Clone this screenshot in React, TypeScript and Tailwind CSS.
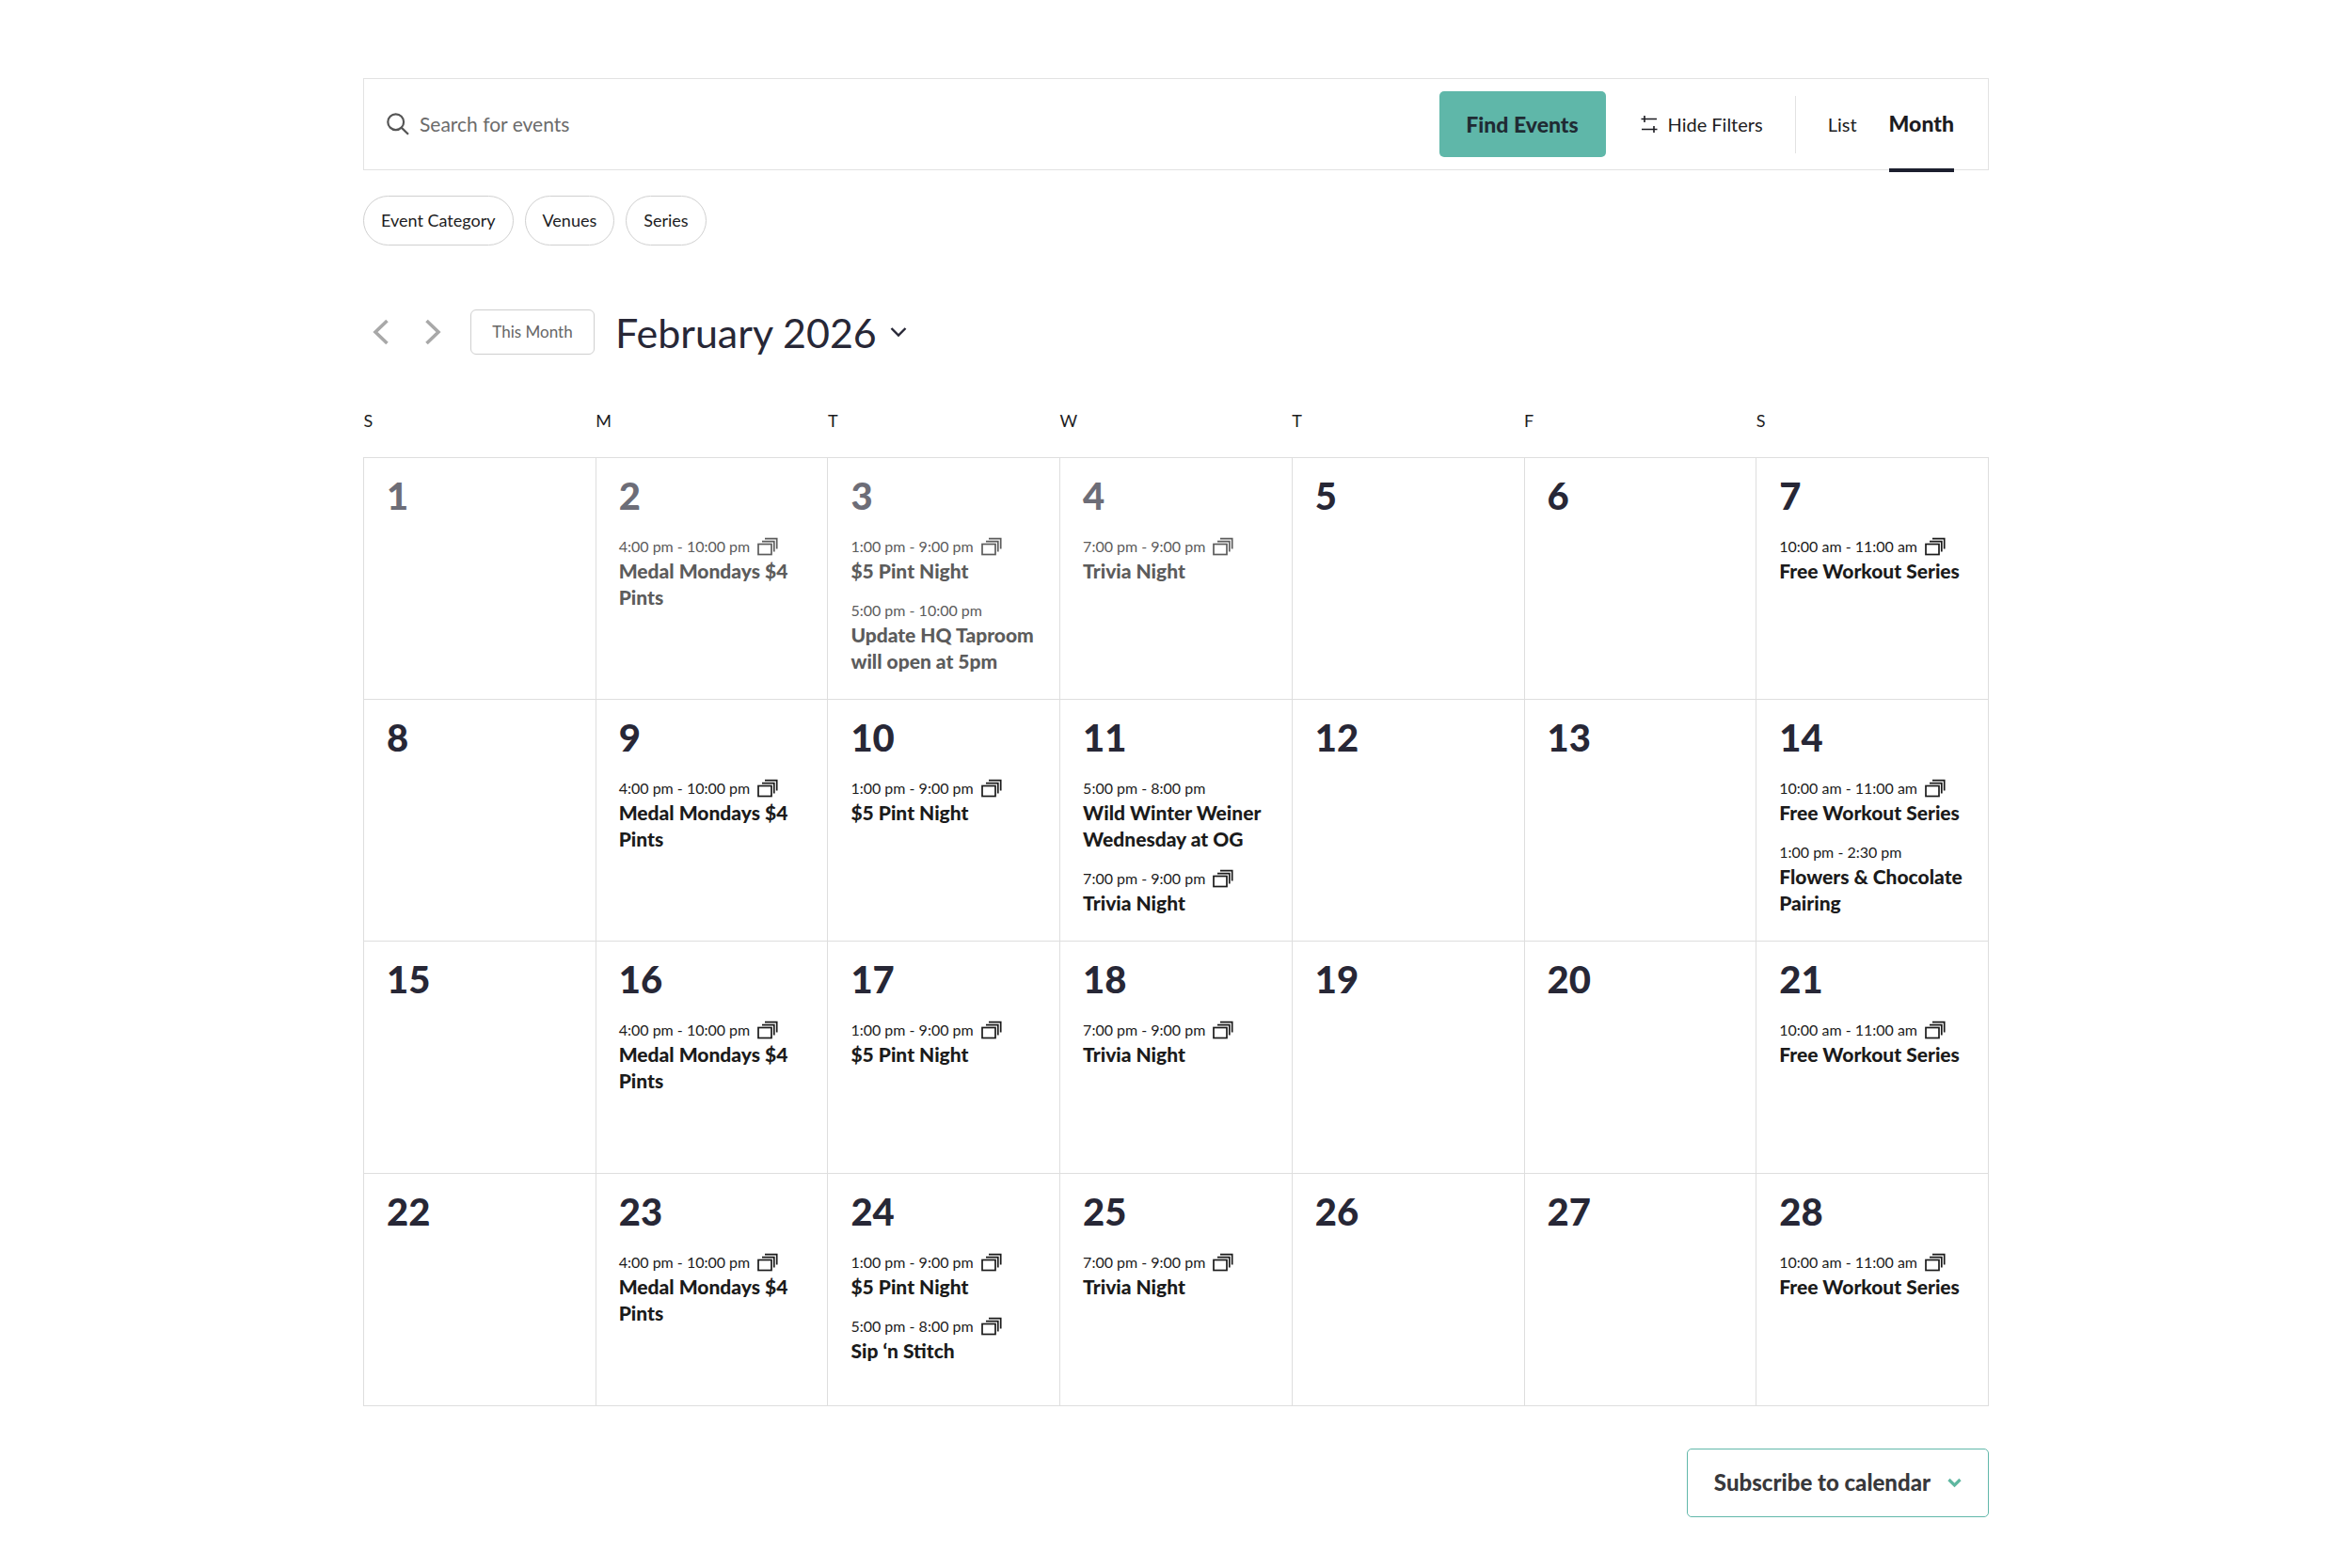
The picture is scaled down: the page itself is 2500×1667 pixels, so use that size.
import React from "react";

type CalendarEvent = { time: string; title: string; recurring?: boolean };

const medal: CalendarEvent = { time: "4:00 pm - 10:00 pm", title: "Medal Mondays $4 Pints", recurring: true };
const pint: CalendarEvent = { time: "1:00 pm - 9:00 pm", title: "$5 Pint Night", recurring: true };
const trivia: CalendarEvent = { time: "7:00 pm - 9:00 pm", title: "Trivia Night", recurring: true };
const workout: CalendarEvent = { time: "10:00 am - 11:00 am", title: "Free Workout Series", recurring: true };

const eventsByDay: Record<number, CalendarEvent[]> = {
  2: [medal],
  3: [pint, { time: "5:00 pm - 10:00 pm", title: "Update HQ Taproom will open at 5pm" }],
  4: [trivia],
  7: [workout],
  9: [medal],
  10: [pint],
  11: [{ time: "5:00 pm - 8:00 pm", title: "Wild Winter Weiner Wednesday at OG" }, trivia],
  14: [workout, { time: "1:00 pm - 2:30 pm", title: "Flowers & Chocolate Pairing" }],
  16: [medal],
  17: [pint],
  18: [trivia],
  21: [workout],
  23: [medal],
  24: [pint, { time: "5:00 pm - 8:00 pm", title: "Sip ‘n Stitch", recurring: true }],
  25: [trivia],
  28: [workout],
};

const weekdays = [
  ["Sunday", "S"],
  ["Monday", "M"],
  ["Tuesday", "T"],
  ["Wednesday", "W"],
  ["Thursday", "T"],
  ["Friday", "F"],
  ["Saturday", "S"],
];
const weeks = [0, 1, 2, 3].map((w) => [1, 2, 3, 4, 5, 6, 7].map((d) => w * 7 + d));
const lastPastDay = 4;

function SeriesIcon() {
  return (
    <svg className="shrink-0" width="22" height="20" viewBox="0 0 22 20" fill="none" stroke="currentColor" strokeWidth="1.7" aria-label="Recurring">
      <rect x="1" y="7.5" width="14" height="11" />
      <path d="M5 4.6H17.8V15.5M8 1.7H20.7V12.5" />
    </svg>
  );
}

function Chevron({ d, className, width, height, viewBox, stroke }: { d: string; className?: string; width: number; height: number; viewBox: string; stroke: number }) {
  return (
    <svg className={className} width={width} height={height} viewBox={viewBox} fill="none" stroke="currentColor" strokeWidth={stroke} aria-hidden="true">
      <path d={d} />
    </svg>
  );
}

function SearchBar() {
  return (
    <form className="flex h-[98px] items-stretch border border-[#e2e2e2] pr-9" onSubmit={(e) => e.preventDefault()}>
      <label htmlFor="event-search" aria-label="Search for events" className="flex items-center pl-6 text-[#555]">
        <svg width="24" height="24" viewBox="0 0 24 24" fill="none" stroke="currentColor" strokeWidth="2.2" aria-hidden="true">
          <circle cx="9.7" cy="9.7" r="8.4" />
          <path d="M15.6 15.6 23 22.8" />
        </svg>
      </label>
      <input
        id="event-search"
        type="text"
        placeholder="Search for events"
        className="min-w-0 flex-1 bg-transparent pl-[11px] text-[21px] text-[#222] outline-none placeholder:text-[#6b6b6b]"
      />
      <button type="submit" className="my-auto h-[70px] w-[177px] shrink-0 rounded-[5px] bg-[#5fb7a9] text-[23px] font-black text-[#1f2b33]">
        Find Events
      </button>
      <button type="button" className="ml-9 flex shrink-0 items-center gap-2.5 text-[20px] text-[#1c1c22]">
        <svg width="20" height="20" viewBox="0 0 20 20" fill="none" stroke="currentColor" strokeWidth="1.6" aria-hidden="true">
          <path d="M1.5 4.5H18M5 1V8M2 15.5H18.5M15 12V19" />
        </svg>
        Hide Filters
      </button>
      <div className="my-auto ml-[34px] h-[61px] w-px shrink-0 bg-[#e2e2e2]" />
      <nav className="ml-[34px] flex shrink-0 gap-[34px] text-[#1c1c22]">
        <a href="#list" className="flex items-center text-[20px]">List</a>
        <a href="#month" aria-current="page" className="-mb-[3px] flex items-center border-b-4 border-[#1c1f2e] text-[23px] font-black">Month</a>
      </nav>
    </form>
  );
}

function EventItem({ event }: { event: CalendarEvent }) {
  return (
    <li>
      <div className="flex h-6 items-center gap-2 whitespace-nowrap text-[16px] leading-6">
        <time>{event.time}</time>
        {event.recurring && <SeriesIcon />}
      </div>
      <a href="#event" className="block text-[21px] font-black leading-7">{event.title}</a>
    </li>
  );
}

function DayCell({ day }: { day: number }) {
  const past = day <= lastPastDay;
  const events = eventsByDay[day] ?? [];
  return (
    <td className="h-[247px] border border-[#dedede] px-6 pb-[26px] pt-5 align-top">
      <h3 className={past ? "text-[40px] font-black leading-10 text-[#6d6d77]" : "text-[40px] font-black leading-10 text-[#272736]"}>{day}</h3>
      {events.length > 0 && (
        <ul className={past ? "mt-[22px] flex flex-col gap-4 text-[#5c5c5c]" : "mt-[22px] flex flex-col gap-4 text-[#1b1b1b]"}>
          {events.map((e) => (
            <EventItem key={e.time} event={e} />
          ))}
        </ul>
      )}
    </td>
  );
}

export default function App() {
  return (
    <main className="min-h-screen bg-white px-8 pb-[52px] pt-[83px] font-['Lato',sans-serif] text-[#1c1c22]">
      <div className="mx-auto w-full max-w-[1728px]">
        <SearchBar />

        <div className="mt-[27px] flex gap-3">
          {["Event Category", "Venues", "Series"].map((label) => (
            <button key={label} type="button" className="h-[53px] rounded-full border border-[#d0d0d0] px-[18px] text-[18px]">
              {label}
            </button>
          ))}
        </div>

        <div className="mt-[68px] flex h-12 items-center">
          <button type="button" aria-label="Previous month" className="ml-2.5 text-[#a8a8a8]">
            <Chevron width={18} height={28} viewBox="0 0 18 28" d="M15.5 2 3 14 15.5 26" stroke={3.6} />
          </button>
          <button type="button" aria-label="Next month" className="ml-[37px] text-[#a8a8a8]">
            <Chevron width={18} height={28} viewBox="0 0 18 28" d="M2.5 2 15 14 2.5 26" stroke={3.6} />
          </button>
          <button type="button" className="ml-[31px] h-12 w-[132px] rounded-[6px] border border-[#cfcfcf] text-[17px] text-[#666]">
            This Month
          </button>
          <button type="button" className="ml-[22px] flex items-center gap-3.5 text-[43px] leading-none text-[#272736]">
            February 2026
            <Chevron width={18} height={12} viewBox="0 0 18 12" d="M1.5 2 9 9.5 16.5 2" stroke={2.4} />
          </button>
        </div>

        <table className="mt-[56px] w-full table-fixed border-collapse">
          <thead>
            <tr>
              {weekdays.map(([name, letter]) => (
                <th key={name} scope="col" abbr={name} className="h-[53px] pb-6 text-left align-top text-[18px] font-normal leading-7">
                  {letter}
                </th>
              ))}
            </tr>
          </thead>
          <tbody>
            {weeks.map((week) => (
              <tr key={week[0]}>
                {week.map((day) => (
                  <DayCell key={day} day={day} />
                ))}
              </tr>
            ))}
          </tbody>
        </table>

        <div className="mt-[45px] flex justify-end">
          <button type="button" className="flex h-[73px] items-center gap-[18px] rounded-[5px] border border-[#62b8aa] px-7 text-[24px] font-black text-[#38383b]">
            Subscribe to calendar
            <Chevron className="text-[#5fb7a0]" width={15} height={11} viewBox="0 0 15 11" d="M1.5 2 7.5 8 13.5 2" stroke={3.2} />
          </button>
        </div>
      </div>
    </main>
  );
}
